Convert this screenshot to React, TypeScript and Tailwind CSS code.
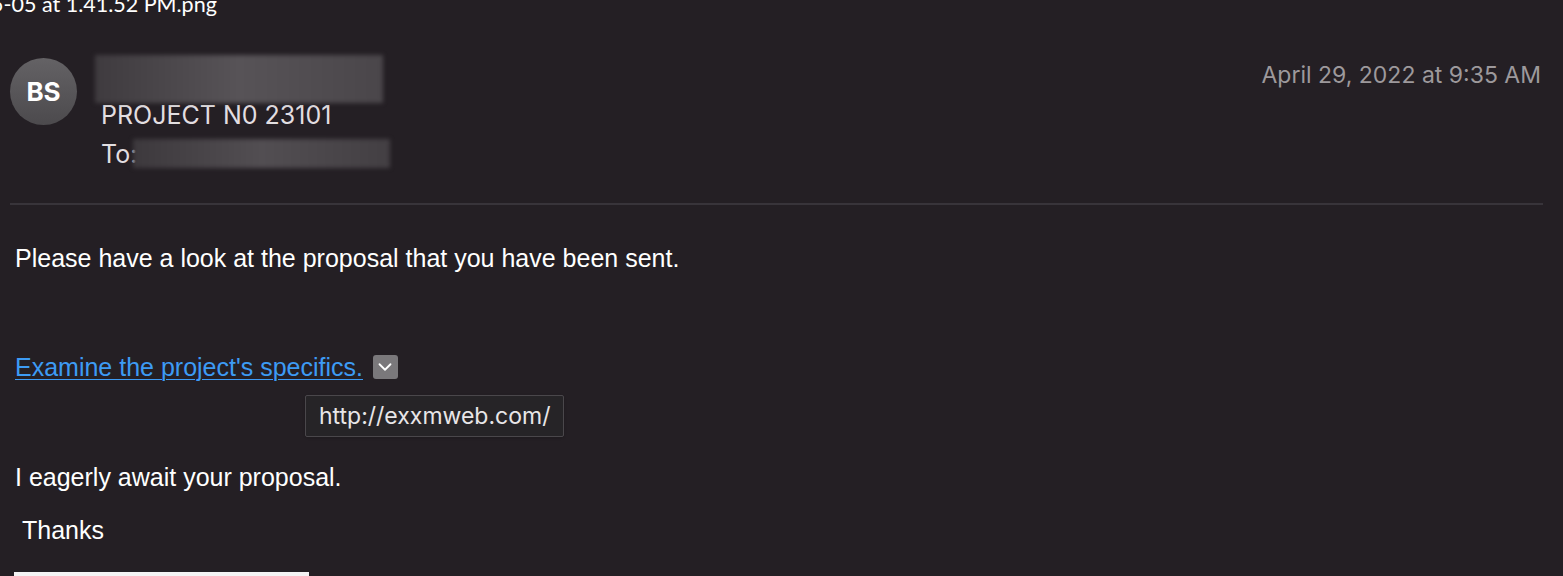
import React from "react";
import { ChevronDown } from "lucide-react";

const App: React.FC = () => {
  return (
    <div className="relative h-[576px] w-[1563px] overflow-hidden bg-[#241f24] text-white">
      {/* window title, cut off at the top-left */}
      <div className="-mt-[8px] -ml-[9px] whitespace-nowrap font-['Lato',sans-serif] text-[21.5px] leading-[25px] text-white">
        5-05 at 1.41.52 PM.png
      </div>

      {/* Header */}
      <div className="flex items-start pl-[10px] pr-[22px] pt-[38px]">
        <div className="mt-[3px] flex h-[67px] w-[67px] shrink-0 items-center justify-center rounded-full bg-gradient-to-b from-[#646265] to-[#4c4a4d] font-['Inter',sans-serif] text-[26px] font-bold text-white">
          BS
        </div>
        <div className="ml-[18px] flex flex-col font-['Inter',sans-serif]">
          <div className="h-[48px] w-[288px] bg-gradient-to-r from-[#3f3b3f] via-[#575357] to-[#4a464a] blur-[2px]" />
          <div className="-mt-[2px] ml-[6px] text-[25px] leading-[28px] text-[#e2dee1]">
            PROJECT N0 23101
          </div>
          <div className="ml-[6px] mt-[10px] flex items-center text-[25px] leading-[28px] text-[#e2dee1]">
            <span>To:</span>
            <div className="-ml-[4px] h-[29px] w-[257px] bg-gradient-to-r from-[#3d393d] via-[#524e52] to-[#433f43] blur-[2px]" />
          </div>
        </div>
        <div className="ml-auto mt-[6px] font-['Inter',sans-serif] text-[23px] leading-[28px] text-[#9d999c]">
          April 29, 2022 at 9:35 AM
        </div>
      </div>

      <div className="ml-[10px] mr-[20px] mt-[35px] h-[2px] bg-[#38343a]" />

      {/* Body */}
      <div className="px-[15px] font-['Liberation_Sans',Arial,sans-serif] text-[25px] leading-[30px] text-white">
        <p className="mt-[38px]">Please have a look at the proposal that you have been sent.</p>

        <div className="relative mt-[79px] flex items-center">
          <a className="text-[#3d9bf4] underline decoration-1 underline-offset-[3px]">
            Examine the project's specifics.
          </a>
          <span className="ml-[10px] flex h-[24px] w-[25px] items-center justify-center rounded-[3px] bg-[#7a787b]">
            <ChevronDown className="h-[22px] w-[22px] text-white" strokeWidth={2} />
          </span>
          <div className="absolute left-[290px] top-[43px] whitespace-nowrap rounded-[2px] border border-[#4a474b] bg-[#262427] px-[13px] py-[6px] font-['Inter',sans-serif] text-[23px] leading-[28px] text-[#e8e6e8] shadow">
            http://exxmweb.com/
          </div>
        </div>

        <p className="mt-[80px]">I eagerly await your proposal.</p>
        <p className="mt-[23px] pl-[7px]">Thanks</p>

        <div className="-ml-[1px] mt-[27px] h-[20px] w-[295px] bg-[#f4f3f4]" />
      </div>
    </div>
  );
};

export default App;
